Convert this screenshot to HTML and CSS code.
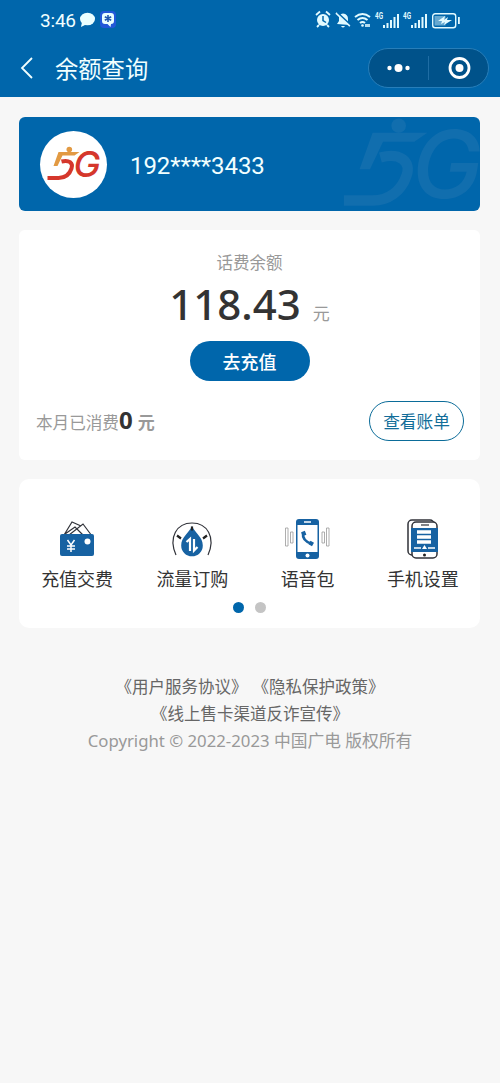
FILE: index.html
```html
<!DOCTYPE html>
<html lang="zh-CN">
<head>
<meta charset="utf-8">
<title>余额查询</title>
<link rel="stylesheet" href="styles.css">
</head>
<body>
<header class="top">
  <div class="status">
    <span class="clock">3:46</span>
    <svg class="chat" width="17" height="16" viewBox="0 0 17 16"><ellipse cx="8.500" cy="7" rx="7.500" ry="6.300"/><path d="M3 10l-1 5 6-3z"/></svg>
    <svg class="badge" width="16" height="18" viewBox="0 0 16 18"><rect class="glow" width="16" height="17" rx="4"/><path d="M5 2h6q3 0 3 3v5q0 3-3 3l-.5 3-3-3H5q-3 0-3-3V5q0-3 3-3z"/><path class="star" d="M8 4v7M4.800 5.800l6.400 3.500M11.200 5.800L4.800 9.300"/></svg>
    <svg class="signals" width="148" height="20" viewBox="0 0 148 20">
      <g class="fill">
        <circle cx="8" cy="10" r="6"/><path d="M1 5l4-3.500M15 5l-4-3.500M4 15l-2 2M12 15l2 2" class="line"/><path class="cut" d="M8 6v4.500l3 2"/>
        <path d="M22 14l2-3V8q0-4 4-4.500Q33 4 33 9v3l2 3zM26 16h4q-2 3-4 0z"/><path class="line" d="M21 3l14 13"/><path class="cut" d="M22.500 2.500l14 13"/>
        <path class="line wave" d="M40 7q7.500-6 15 0M42.500 10q5-4 10 0M45 13q2.500-2 5 0"/><circle cx="47.500" cy="15.500" r="1.300"/><path d="M50 14h5v3h-5z" opacity=".8"/>
        <text x="60" y="8.500" class="net" textLength="8" lengthAdjust="spacingAndGlyphs">4G</text>
        <path d="M68 15h2v3h-2zM71.500 13h2v5h-2zM75 10h2v8h-2zM78.500 7h2v11h-2zM82 4h2v14h-2z"/>
        <text x="88" y="8.500" class="net" textLength="8" lengthAdjust="spacingAndGlyphs">4G</text>
        <path d="M96 15h2v3h-2zM99.500 13h2v5h-2zM103 10h2v8h-2zM106.500 7h2v11h-2zM110 4h2v14h-2z"/>
        <rect class="box" x="117.700" y="3.700" width="23" height="14" rx="2.500"/><rect x="119.500" y="6" width="11" height="9.500" opacity=".45"/><path d="M123 11l7-5-1 4 4-3-1 3h5l-8 5 1-3-4 2 1-3z"/><rect x="143" y="7" width="1.800" height="7"/>
      </g>
    </svg>
  </div>
  <div class="nav">
    <svg class="back" width="14" height="22" viewBox="0 0 14 22"><path d="M12 1L2 11l10 10"/></svg>
    <h1 class="title">余额查询</h1>
    <div class="capsule">
      <svg class="more" width="60" height="38" viewBox="0 0 60 38"><circle cx="20.500" cy="19" r="2.200"/><circle cx="29.500" cy="19" r="4"/><circle cx="38.500" cy="19" r="2.200"/></svg>
      <svg class="close" width="59" height="38" viewBox="0 0 59 38"><circle class="ring" cx="30.500" cy="19" r="9.500"/><circle cx="30.500" cy="19" r="4"/></svg>
    </div>
  </div>
</header>
<main class="page">
  <section class="account">
    <div class="avatar">
      <svg class="logo" width="56" height="36" viewBox="0 0 56 36">
        <circle class="mark-a" cx="23.300" cy="3.500" r="2.800"/>
        <path class="mark-a" d="M12.500 6H33.500l-5 3.500H16.500L11.500 20H7.500z"/>
        <path class="mark-b" d="M15.500 15.500C23 13.500 27.500 17 25.500 22.500c-2 6-7 9.500-13 9.500H1.500"/>
        <text class="mark-text" x="27.500" y="31" textLength="27" lengthAdjust="spacingAndGlyphs">G</text>
      </svg>
    </div>
    <span class="phone">192****3433</span>
    <svg class="watermark" width="146" height="94" viewBox="0 0 56 36">
      <circle class="mark-a" cx="22.500" cy="3.300" r="2.800"/>
      <path class="mark-a" d="M12.500 6H33.500l-5 3.500H16.500L11.500 20H7.500z"/>
      <path class="mark-b" d="M15.500 15.500C23 13.500 27.500 17 25.500 22.500c-2 6-7 9.500-13 9.500H1.500"/>
      <text class="mark-text" x="27.500" y="31" textLength="27" lengthAdjust="spacingAndGlyphs">G</text>
    </svg>
  </section>
  <section class="balance">
    <p class="label">话费余额</p>
    <p class="amount"><span class="value">118.43</span><span class="unit">元</span></p>
    <button class="recharge">去充值</button>
    <div class="month">
      <span class="spent">本月已消费<b class="zero">0</b><b class="yuan">元</b></span>
      <button class="bill">查看账单</button>
    </div>
  </section>
  <section class="services">
    <div class="grid">
      <div class="item">
        <svg class="icon" width="46" height="46" viewBox="0 0 46 46"><path class="outline" d="M10 18L18 5l9 4M15 18L29 7l9 12M11 17l10-7 8 8"/><rect class="blue" x="6" y="17" width="34" height="22" rx="2"/><circle class="white" cx="33.500" cy="24.500" r="3"/><path class="wline" d="M13.500 23l3.500 5 3.500-5M17 28v7M13 29h8M13 32h8"/></svg>
        <span>充值交费</span>
      </div>
      <div class="item">
        <svg class="icon" width="46" height="46" viewBox="0 0 46 46"><path class="outline" d="M7 38C-1 20 8 6 23 6s24 14 16 32"/><path class="blue" d="M23 9c3 7 10.800 11 10.800 19.500a10.800 10.800 0 0 1-21.600 0C12.200 20 20 16 23 9z"/><path class="tick" d="M23 9.500v4M8 18.500l4 3M38 18.500l-4 3"/><path class="wline bold" d="M17.500 25l3.500-3v12M25 22v11.500l3.500-3.500"/></svg>
        <span>流量订购</span>
      </div>
      <div class="item">
        <svg class="icon" width="46" height="46" viewBox="0 0 46 46"><rect class="blue" x="12" y="2" width="23" height="40" rx="3"/><path class="white" d="M13.500 8h20v27h-20z"/><path class="wline" d="M20 5h7"/><circle class="white" cx="23.500" cy="38.500" r="2"/><path class="handset" d="M19 16q-1 8 9 11"/><path class="handset ends" d="M19 14.500l1.500 4M25.500 25.500l3.500 2"/><path class="bars" d="M1.500 11h2.500v18H1.500zM6.500 15H9v11H6.500zM38 15h2.500v11H38zM42.500 11H45v18h-2.500z"/></svg>
        <span>语音包</span>
      </div>
      <div class="item">
        <svg class="icon" width="46" height="46" viewBox="0 0 46 46"><rect class="outline body" x="9" y="3" width="26" height="35" rx="4"/><rect class="outline body" x="13" y="5" width="25" height="36" rx="4"/><path class="outline" d="M22 8h8"/><path class="blue" d="M12 11h27v24H12z"/><path class="wline rows" d="M18 15h14M18 20h14M18 25h14"/><path class="wline" d="M15 31h7M29 31h7"/><path class="white" d="M23 32l2.500-4 2.500 4z"/><circle class="dark" cx="25.500" cy="38" r="1.500"/></svg>
        <span>手机设置</span>
      </div>
    </div>
    <div class="dots"><i class="dot on"></i><i class="dot"></i></div>
  </section>
</main>
<footer class="footer">
  <p class="links"><span>《用户服务协议》</span><span>《隐私保护政策》</span></p>
  <p class="links">《线上售卡渠道反诈宣传》</p>
  <p class="copy">Copyright © 2022-2023 中国广电 版权所有</p>
</footer>
</body>
</html>
```

FILE: styles.css
```css
* { box-sizing: border-box; }
body { margin: 0; min-height: 1083px; background: #f7f7f7; color: #333; font-family: Roboto, "Noto Sans CJK SC", sans-serif; }
p, h1 { margin: 0; }
button { padding: 0; font-family: inherit; }
svg { display: block; flex: none; }

.top { height: 97px; background: #0066ab; color: #f1ffff; }
.status { display: flex; align-items: center; height: 39px; padding-left: 40px; }
.clock { width: 39px; font-size: 19px; line-height: 39px; letter-spacing: -0.2px; padding-top: 1px; }
.chat { fill: #eaffff; }
.badge { margin-left: 4px; fill: #eaffff; }
.badge .glow { fill: #2258d8; }
.badge .star { stroke: #2258b0; stroke-width: 1.6; }
.signals { margin-left: auto; margin-right: 37px; }
.fill { fill: #e2faff; }
.line { fill: none; stroke: #e2faff; stroke-width: 1.8; }
.wave { stroke-width: 2; }
.cut { fill: none; stroke: #0066ab; stroke-width: 1.5; }
.net { font-size: 8.500px; font-weight: 700; }
.box { fill: none; stroke: #e2faff; stroke-width: 1.4; }

.nav { display: flex; align-items: center; height: 58px; padding: 0 11px 0 20px; }
.back { fill: none; stroke: #f1ffff; stroke-width: 1.8; }
.title { margin-left: 21px; padding-top: 3px; font-size: 23.3px; font-weight: 400; line-height: 34px; }
.capsule { display: flex; width: 121px; height: 40px; margin-left: auto; border: 1px solid #277eb9; border-radius: 20px; background: #00528a; fill: #fff; }
.more { background: linear-gradient(#1f6da4, #1f6da4) right center / 1px 24px no-repeat; }
.ring { fill: none; stroke: #fff; stroke-width: 2.8; }

.page { display: grid; gap: 19px; padding: 20px 20px 0 19px; }
.account { position: relative; display: flex; align-items: center; height: 94px; padding-left: 21px; overflow: hidden; border-radius: 6px; background: #0066ab; }
.avatar { display: flex; align-items: center; justify-content: center; width: 67px; height: 67px; border-radius: 50%; background: #fff; }
.logo { --a: #e29a43; --b: #d5372c; overflow: visible; }
.watermark { --a: #116eae; --b: #116eae; position: absolute; right: -6px; top: 0; overflow: visible; }
.mark-a { fill: var(--a); }
.mark-b { fill: none; stroke: var(--b); stroke-width: 4; }
.mark-text { fill: var(--b); font: italic 500 36px Inter, sans-serif; }
.phone { margin-left: 23px; padding-top: 4px; color: #f1ffff; font-size: 24px; letter-spacing: -0.1px; }

.balance { display: flex; flex-direction: column; align-items: center; height: 230px; padding: 21px 16px 0; border-radius: 6px; background: #fff; }
.label { color: #999; font-size: 16.500px; line-height: 26px; }
.amount { display: flex; align-items: baseline; height: 64px; line-height: 58px; }
.value { font: 500 42px/54px "Noto Sans", sans-serif; }
.unit { margin-left: 12px; color: #999; font-size: 17px; line-height: 40px; }
.recharge { width: 120px; height: 40px; border: 0; border-radius: 20px; background: #0066ab; color: #fff; font-size: 18px; font-weight: 500; }
.month { display: flex; align-items: center; justify-content: space-between; align-self: stretch; margin-top: 20px; }
.spent { display: flex; align-items: baseline; padding-left: 1px; color: #999; font-size: 16.600px; }
.zero { color: #333; font: 700 24px/32px "Noto Sans", sans-serif; margin-top: -2px; }
.yuan { margin-left: 5px; font-size: 17px; }
.bill { width: 95px; height: 40px; border: 1.5px solid #0b6c99; border-radius: 20px; background: #fff; color: #126d99; font-size: 16.700px; }

.services { height: 149px; padding-top: 38px; border-radius: 10px; background: #fff; }
.grid { display: grid; grid-template-columns: repeat(4, 1fr); }
.item { display: flex; flex-direction: column; align-items: center; font-size: 18px; line-height: 30px; }
.item span { padding-left: 1px; }
.icon { margin-bottom: 2px; }
.blue { fill: #1762a2; }
.white { fill: #fff; }
.dark { fill: #222; }
.outline { fill: none; stroke: #303239; stroke-width: 1.2; }
.body { fill: #fff; stroke-width: 1.5; }
.wline { fill: none; stroke: #fff; stroke-width: 1.5; }
.rows { stroke-width: 3.500; }
.bold { stroke-width: 2.200; }
.tick { stroke: #222; stroke-width: 2.200; }
.handset { fill: none; stroke: #1762a2; stroke-width: 2.600; }
.ends { stroke-width: 4; }
.bars { fill: #fff; stroke: #999; stroke-width: 0.8; }
.dots { display: flex; justify-content: center; gap: 11px; margin-top: 7px; }
.dot { width: 11px; height: 11px; border-radius: 50%; background: #c4c4c4; }
.on { background: #0066ab; }

.footer { padding-top: 47px; text-align: center; font-size: 16.500px; line-height: 26.500px; }
.links { display: flex; justify-content: center; gap: 5px; color: #666; }
.copy { color: #999; font-family: "Noto Sans", "Noto Sans CJK SC", sans-serif; font-size: 16.750px; line-height: 26px; }
```
